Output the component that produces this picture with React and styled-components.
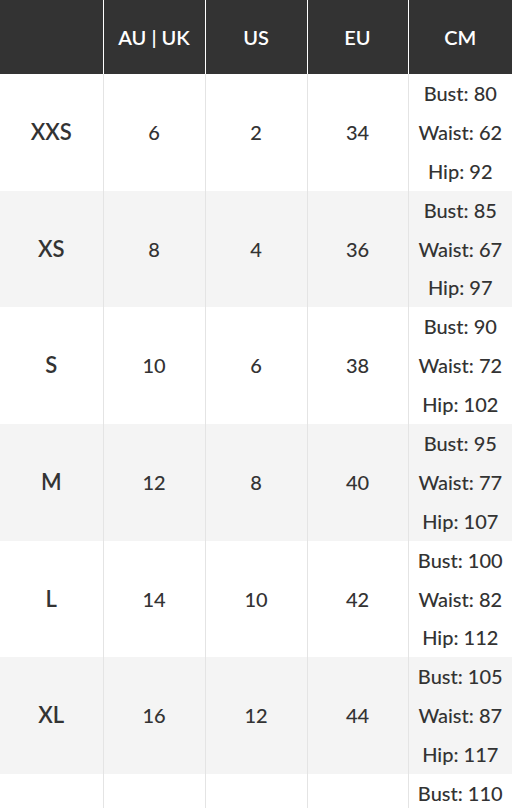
import React from 'react';
import styled, { createGlobalStyle } from 'styled-components';

const GlobalStyle = createGlobalStyle`
  html, body {
    margin: 0;
    padding: 0;
    background: #fff;
  }
  body {
    font-family: Lato, "Noto Sans", sans-serif;
  }
`;

const rows = [
  { size: 'XXS', au: 6, us: 2, eu: 34, bust: 80, waist: 62, hip: 92 },
  { size: 'XS', au: 8, us: 4, eu: 36, bust: 85, waist: 67, hip: 97 },
  { size: 'S', au: 10, us: 6, eu: 38, bust: 90, waist: 72, hip: 102 },
  { size: 'M', au: 12, us: 8, eu: 40, bust: 95, waist: 77, hip: 107 },
  { size: 'L', au: 14, us: 10, eu: 42, bust: 100, waist: 82, hip: 112 },
  { size: 'XL', au: 16, us: 12, eu: 44, bust: 105, waist: 87, hip: 117 },
  { size: 'XXL', au: 18, us: 14, eu: 46, bust: 110, waist: 92, hip: 122 },
];

const App = () => {
  return (
    <>
      <GlobalStyle />
      <STable>
        <colgroup>
          <col style={{ width: 103 }} />
          <col style={{ width: 102 }} />
          <col style={{ width: 102 }} />
          <col style={{ width: 101 }} />
          <col />
        </colgroup>
        <thead>
          <tr>
            <STh></STh>
            <STh>AU | UK</STh>
            <STh>US</STh>
            <STh>EU</STh>
            <STh>CM</STh>
          </tr>
        </thead>
        <tbody>
          {rows.map((r, i) => (
            <SRow key={r.size} $shade={i % 2 === 1}>
              <SSizeCell>{r.size}</SSizeCell>
              <STd>{r.au}</STd>
              <STd>{r.us}</STd>
              <STd>{r.eu}</STd>
              <STd>
                Bust: {r.bust}<br />
                Waist: {r.waist}<br />
                Hip: {r.hip}
              </STd>
            </SRow>
          ))}
        </tbody>
      </STable>
    </>
  );
};

export default App;

const STable = styled.table`
  width: 512px;
  table-layout: fixed;
  border-collapse: collapse;
  border-spacing: 0;
  font-family: Lato, "Noto Sans", sans-serif;
  font-size: 20px;
  color: #333;
`;

const STh = styled.th`
  height: 74px;
  padding: 0;
  background: #333333;
  color: #fff;
  font-weight: 600;
  font-size: 20px;
  text-align: center;
  vertical-align: middle;
  border-left: 1px solid #fff;
  &:first-child {
    border-left: none;
  }
`;

const SRow = styled.tr`
  background: ${(p) => (p.$shade ? '#f4f4f4' : '#fff')};
`;

const STd = styled.td`
  padding: 0;
  height: 116.67px;
  line-height: 38.89px;
  text-align: center;
  vertical-align: middle;
  font-weight: 500;
  border-left: 1px solid #e4e4e4;
`;

const SSizeCell = styled(STd)`
  font-size: 22px;
  font-weight: 600;
  border-left: none;
`;
